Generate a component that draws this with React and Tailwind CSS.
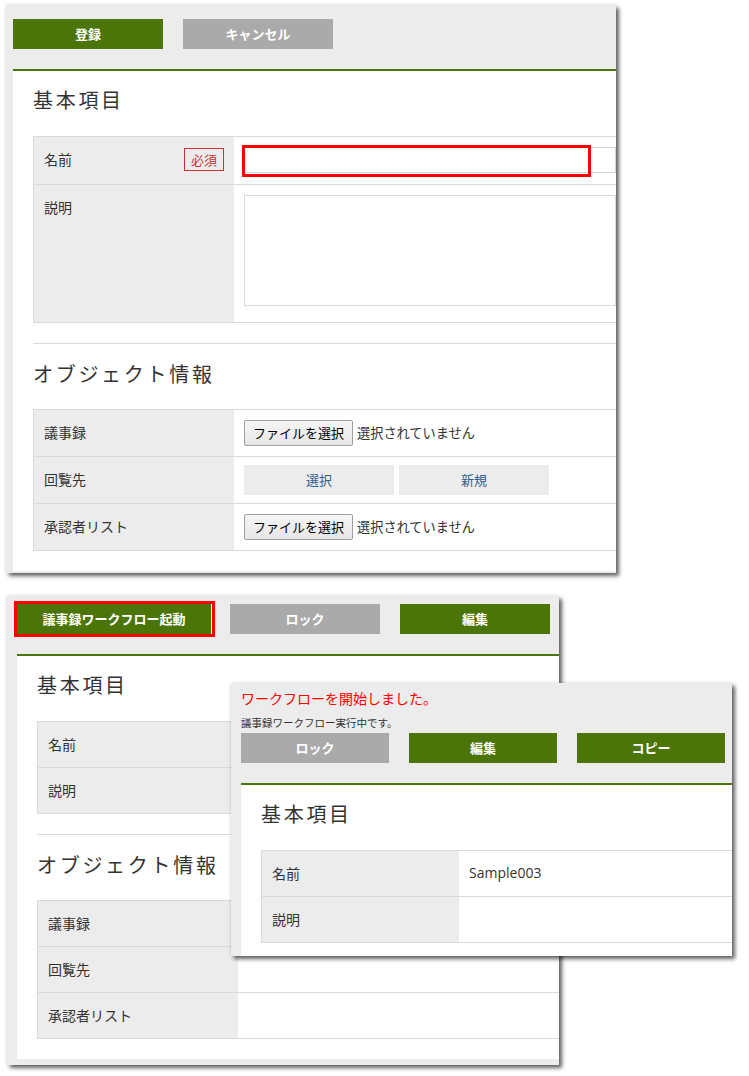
import React from "react";

const SHADOW = "shadow-[3px_3px_4px_rgba(0,0,0,0.6),0_0_4px_rgba(0,0,0,0.12)]";

function GreenBtn({ children, w = "w-[150px]", extra = "" }) {
  return (
    <div className={`${w} h-[30px] bg-[#4b7508] text-white text-[13px] font-bold flex items-center justify-center shrink-0 ${extra}`}>
      {children}
    </div>
  );
}
function GrayBtn({ children, w = "w-[150px]", extra = "" }) {
  return (
    <div className={`${w} h-[30px] bg-[#aaaaaa] text-white text-[13px] font-bold flex items-center justify-center shrink-0 ${extra}`}>
      {children}
    </div>
  );
}

function Heading({ children, pt }) {
  return (
    <div className={`${pt} text-[20px] leading-[30px] tracking-[2.7px] text-[#333333] whitespace-nowrap`}>
      {children}
    </div>
  );
}

function Row({ label, labelW = "w-[200px]", h = "h-[45px]", right, badge }) {
  return (
    <div className="flex border-b border-[#dadada]">
      <div className={`${labelW} ${h} shrink-0 bg-[#ececec] pl-[10px] pr-[10px] pt-[12px] flex justify-between items-start text-[14px] leading-[20px] text-[#333333]`}>
        <span>{label}</span>
        {badge}
      </div>
      <div className="flex-1 relative">{right}</div>
    </div>
  );
}

function FileInput() {
  return (
    <div className="flex items-center pl-[10px] pt-[10px] whitespace-nowrap">
      <div className="h-[26px] px-[8px] border border-[#a0a0a0] rounded-[2px] bg-gradient-to-b from-[#f6f6f6] to-[#e6e6e6] text-[13px] leading-[24px] text-black">
        ファイルを選択
      </div>
      <span className="ml-[4px] text-[13.2px] text-[#333333]">選択されていません</span>
    </div>
  );
}

export default function App() {
  return (
    <div className="relative w-[749px] h-[1076px] bg-white overflow-hidden font-['Noto_Sans_CJK_JP','Noto_Sans',sans-serif]">
      {/* Panel 1 */}
      <div className={`absolute left-[6px] top-[5px] w-[610px] h-[568px] bg-[#ececec] overflow-hidden ${SHADOW}`}>
        <div className="pl-[7px] pt-[14px] flex gap-[20px]">
          <GreenBtn>登録</GreenBtn>
          <GrayBtn>キャンセル</GrayBtn>
        </div>
        <div className="ml-[7px] mt-[20px] border-t-2 border-[#4b7508] bg-white pl-[20px] pb-[20px]">
          <Heading pt="pt-[14px]">基本項目</Heading>
          <div className="mt-[21px] border-l border-t border-[#dadada]">
            <Row
              label="名前"
              h="h-[47px]"
              badge={
                <span className="mt-[-1px] w-[40px] h-[23px] border border-[#cc3333] text-[#cc3333] text-[13px] leading-[21px] flex items-center justify-center">
                  必須
                </span>
              }
              right={
                <div className="pl-[10px] pt-[10px]">
                  <div className="h-[26px] border border-[#d4d4d4] bg-white"></div>
                  <div className="absolute left-[8px] top-[8px] w-[349px] h-[32px] border-[3px] border-[#ff0000]"></div>
                </div>
              }
            />
            <Row
              label="説明"
              h="h-[137px]"
              right={
                <div className="pl-[10px] pt-[10px]">
                  <div className="h-[111px] border border-[#dadada] bg-white"></div>
                </div>
              }
            />
          </div>
          <div className="mt-[20px] border-t border-[#dadada]"></div>
          <Heading pt="pt-[15px]">オブジェクト情報</Heading>
          <div className="mt-[20px] border-l border-t border-[#dadada]">
            <Row label="議事録" h="h-[46px]" right={<FileInput />} />
            <Row
              label="回覧先"
              h="h-[46px]"
              right={
                <div className="pl-[10px] pt-[8px] flex gap-[5px]">
                  <div className="w-[150px] h-[30px] bg-[#ececec] text-[#2f5f8a] text-[13px] flex items-center justify-center">選択</div>
                  <div className="w-[150px] h-[30px] bg-[#ececec] text-[#2f5f8a] text-[13px] flex items-center justify-center">新規</div>
                </div>
              }
            />
            <Row label="承認者リスト" h="h-[46px]" right={<FileInput />} />
          </div>
        </div>
      </div>

      {/* Panel 2 */}
      <div className={`absolute left-[7px] top-[596px] w-[552px] h-[469px] bg-[#ececec] overflow-hidden ${SHADOW}`}>
        <div className="relative pl-[10px] pt-[8px] flex">
          <GreenBtn w="w-[194px]" extra="text-[13.5px]">議事録ワークフロー起動</GreenBtn>
          <GrayBtn extra="ml-[19px]">ロック</GrayBtn>
          <GreenBtn extra="ml-[20px]">編集</GreenBtn>
          <div className="absolute left-[7px] top-[5px] w-[201px] h-[36px] border-[3px] border-[#ff0000]"></div>
        </div>
        <div className="ml-[10px] mt-[20px] border-t-2 border-[#4b7508] bg-white pl-[20px] pb-[20px]">
          <Heading pt="pt-[14px]">基本項目</Heading>
          <div className="mt-[21px] border-l border-t border-[#dadada]">
            <Row label="名前" />
            <Row label="説明" />
          </div>
          <div className="mt-[20px] border-t border-[#dadada]"></div>
          <Heading pt="pt-[15px]">オブジェクト情報</Heading>
          <div className="mt-[20px] border-l border-t border-[#dadada]">
            <Row label="議事録" />
            <Row label="回覧先" />
            <Row label="承認者リスト" />
          </div>
        </div>
      </div>

      {/* Panel 3 */}
      <div className={`absolute left-[231px] top-[683px] w-[501px] h-[273px] bg-[#ececec] overflow-hidden ${SHADOW}`}>
        <div className="pl-[10px] pt-[5px]">
          <div className="text-[14px] leading-[20px] text-[#ff0000] whitespace-nowrap">ワークフローを開始しました。</div>
          <div className="mt-[7px] text-[10.5px] leading-[16px] text-[#333333] whitespace-nowrap">議事録ワークフロー実行中です。</div>
          <div className="mt-[2px] flex gap-[20px]">
            <GrayBtn w="w-[148px]">ロック</GrayBtn>
            <GreenBtn w="w-[148px]">編集</GreenBtn>
            <GreenBtn w="w-[148px]">コピー</GreenBtn>
          </div>
        </div>
        <div className="ml-[10px] mt-[20px] border-t-2 border-[#4b7508] bg-white pl-[20px] pb-[20px]">
          <Heading pt="pt-[14px]">基本項目</Heading>
          <div className="mt-[21px] border-l border-t border-[#dadada]">
            <Row
              label="名前"
              labelW="w-[197px]"
              right={<div className="pl-[10px] pt-[12px] text-[14px] leading-[20px] text-[#333333] font-['Open_Sans','Noto_Sans_CJK_JP',sans-serif]">Sample003</div>}
            />
            <Row label="説明" labelW="w-[197px]" />
          </div>
        </div>
      </div>
    </div>
  );
}
